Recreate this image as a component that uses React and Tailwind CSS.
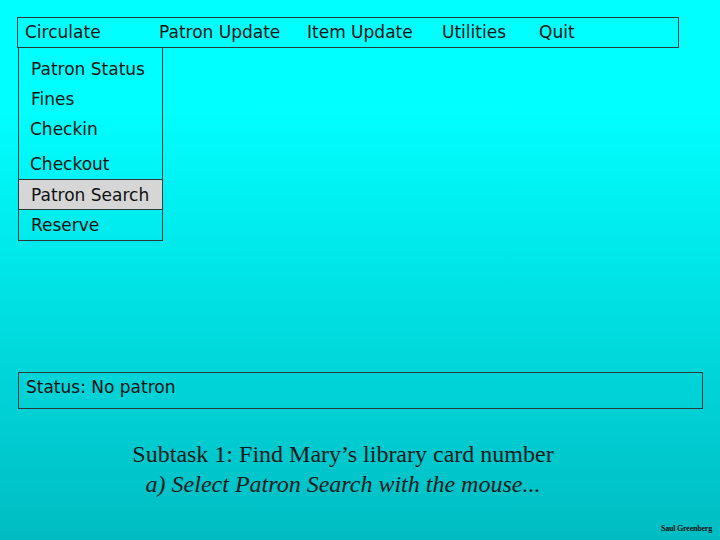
import React from 'react';

const menus = [
    { label: 'Circulate', x: 'w-[134px]' },
    { label: 'Patron Update', x: 'w-[148px]' },
    { label: 'Item Update', x: 'w-[135px]' },
    { label: 'Utilities', x: 'w-[97px]' },
    { label: 'Quit', x: 'w-[60px]' },
];

const items = [
    { label: 'Patron Status', h: 'h-[35px] pt-[8px]', pl: 'pl-[12px]' },
    { label: 'Fines', h: 'h-[30px] pt-[4px]', pl: 'pl-[12px]' },
    { label: 'Checkin', h: 'h-[31px] pt-[2px]', pl: 'pl-[11px]' },
    { label: 'Checkout', h: 'h-[35px] pt-[6px]', pl: 'pl-[11px]' },
];

export default function App() {
    return (
        <div className="w-[720px] h-[540px] overflow-hidden flex flex-col bg-gradient-to-b from-[#00ffff] from-20% to-[#00bcc2] text-[#111] font-['DejaVu_Sans',sans-serif]">
            {/* menu bar */}
            <div className="mt-[17px] ml-[17px] w-[662px] h-[31px] border border-[#2a3a3a] flex items-center pl-[7px] text-[17px]">
                {menus.map((m) => (
                    <span key={m.label} className={`${m.x} shrink-0`}>{m.label}</span>
                ))}
            </div>

            {/* Circulate dropdown */}
            <div className="ml-[18px] w-[145px] border-x border-b border-[#2a3a3a] flex flex-col text-[17px]">
                {items.map((it) => (
                    <div key={it.label} className={`${it.h} ${it.pl} flex items-center`}>{it.label}</div>
                ))}
                <div className="h-[31px] pl-[12px] pt-[3px] flex items-center bg-[#d6d6d6] border-y border-[#2a3a3a]">Patron Search</div>
                <div className="h-[30px] pl-[12px] pt-[2px] flex items-center">Reserve</div>
            </div>

            {/* status */}
            <div className="mt-[131px] ml-[18px] w-[685px] h-[37px] border border-[#2a3a3a] flex items-center pl-[7px] pb-[6px] text-[17px]">
                Status: No patron
            </div>

            {/* caption */}
            <div className="mt-[30px] w-[686px] flex flex-col items-center font-['Liberation_Serif',serif] text-[24px] leading-[30px] text-[#0c1a1a]">
                <span>Subtask 1: Find Mary’s library card number</span>
                <span className="italic">a) Select Patron Search with the mouse...</span>
            </div>

            <div className="mt-auto mb-[5px] mr-[8px] self-end text-[8px] font-['Liberation_Serif',serif] font-bold tracking-tight">
                Saul Greenberg
            </div>
        </div>
    );
}
